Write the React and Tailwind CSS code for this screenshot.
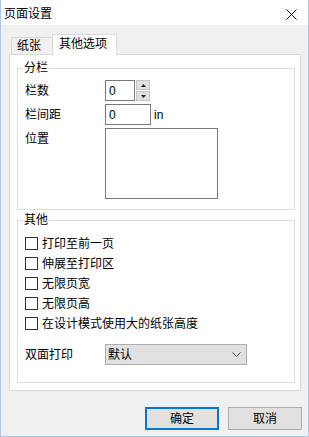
import React from 'react';

const font = "font-['Liberation_Sans','Noto_Sans_CJK_SC',sans-serif]";

const Checkbox = ({ label }) => (
  <label className="flex items-center h-[13px] gap-[4px]">
    <span className="w-[13px] h-[13px] border border-[#333333] bg-white shrink-0" />
    <span className="leading-[14px]">{label}</span>
  </label>
);

const Group = ({ title, className, children }) => (
  <fieldset className={`border border-[#dcdcdc] ${className}`}>
    <legend className="-ml-[2px] px-[1px] leading-[14px]">{title}</legend>
    {children}
  </fieldset>
);

export default function App() {
  return (
    <div className={`w-[309px] h-[437px] bg-[#f0f0f0] border-x border-b border-[#a9c9ea] flex flex-col text-[12px] text-black ${font}`}>
      {/* Title bar */}
      <div className="h-[25px] bg-white flex items-center justify-between pl-[3px] pr-[11px] shrink-0">
        <span className="leading-[14px] mt-[2px]">页面设置</span>
        <svg width="11" height="11" viewBox="0 0 11 11" className="mt-[4px]">
          <path d="M0.5 0.5 L10.5 10.5 M10.5 0.5 L0.5 10.5" stroke="#111" strokeWidth="1" fill="none" />
        </svg>
      </div>

      {/* Tabs */}
      <div className="flex items-end pl-[9px] mt-[9px] h-[20px]">
        <div className="ml-[1px] w-[42px] h-[17px] border border-b-0 border-[#d9d9d9] bg-[#f0f0f0] pl-[5px] pt-[1px] leading-[14px]">纸张</div>
        <div className="relative z-10 -ml-px -mb-px w-[65px] h-[21px] border border-b-0 border-[#d9d9d9] bg-white pl-[6px] pt-[2px] leading-[14px]">其他选项</div>
      </div>

      {/* Panel */}
      <div className="ml-[8px] w-[292px] h-[337px] border border-[#d9d9d9] bg-white pl-[7px] pr-[5px] pt-[6px]">
        <Group title="分栏" className="h-[149px] pl-[7px] pt-[5px]">
          <div className="flex items-center h-[21px]">
            <span className="w-[80px] leading-[14px]">栏数</span>
            <div className="w-[30px] h-[21px] border border-[#7a7a7a] pl-[3px] flex items-center">0</div>
            <div className="ml-[1px] flex flex-col gap-[1px]">
              <div className="w-[14px] h-[10px] bg-[#e1e1e1] border border-[#c4c4c4] flex items-center justify-center">
                <svg width="5" height="3" viewBox="0 0 5 3"><path d="M2.5 0 L5 3 L0 3 Z" fill="#222" /></svg>
              </div>
              <div className="w-[14px] h-[10px] bg-[#e1e1e1] border border-[#c4c4c4] flex items-center justify-center">
                <svg width="5" height="3" viewBox="0 0 5 3"><path d="M0 0 L5 0 L2.5 3 Z" fill="#222" /></svg>
              </div>
            </div>
          </div>
          <div className="flex items-center h-[21px] mt-[3px]">
            <span className="w-[80px] leading-[14px]">栏间距</span>
            <div className="w-[46px] h-[21px] border border-[#7a7a7a] pl-[3px] flex items-center">0</div>
            <span className="ml-[3px]">in</span>
          </div>
          <div className="flex mt-[3px]">
            <span className="w-[80px] leading-[14px] mt-[4px]">位置</span>
            <div className="w-[113px] h-[71px] border border-[#7a7a7a]" />
          </div>
        </Group>

        <Group title="其他" className="mt-[3px] h-[170px] pl-[7px] pt-[10px]">
          <div className="flex flex-col gap-[7px]">
            <Checkbox label="打印至前一页" />
            <Checkbox label="伸展至打印区" />
            <Checkbox label="无限页宽" />
            <Checkbox label="无限页高" />
            <Checkbox label="在设计模式使用大的纸张高度" />
          </div>
          <div className="flex items-center mt-[14px]">
            <span className="w-[80px] leading-[14px]">双面打印</span>
            <div className="w-[142px] h-[21px] bg-[#e1e1e1] border border-[#adadad] flex items-center justify-between pl-[2px] pr-[5px]">
              <span className="leading-[14px]">默认</span>
              <svg width="9" height="5" viewBox="0 0 9 5"><path d="M0.5 0.5 L4.5 4.5 L8.5 0.5" stroke="#444" strokeWidth="1" fill="none" /></svg>
            </div>
          </div>
        </Group>
      </div>

      {/* Buttons */}
      <div className="flex justify-end gap-[9px] pr-[6px] mt-[16px]">
        <button className="w-[74px] h-[23px] bg-[#e1e1e1] border-2 border-[#0078d7] leading-[14px]">确定</button>
        <button className="w-[74px] h-[23px] bg-[#e1e1e1] border border-[#adadad] leading-[14px]">取消</button>
      </div>
    </div>
  );
}
